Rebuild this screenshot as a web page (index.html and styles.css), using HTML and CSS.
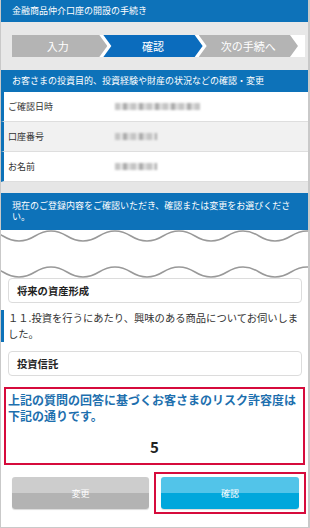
FILE: index.html
```html
<!DOCTYPE html>
<html lang="ja">
<head>
    <meta charset="UTF-8">
    <meta name="viewport" content="width=device-width, initial-scale=1.0">
    <title>金融商品仲介口座の開設の手続き</title>
    <link rel="stylesheet" href="styles.css">
</head>
<body>
    <div class="page">
        <!-- Header -->
        <header class="top-bar">金融商品仲介口座の開設の手続き</header>

        <!-- Steps -->
        <div class="steps-wrap">
            <div class="steps">
                <div class="step">入力</div>
                <div class="step current">確認</div>
                <div class="step">次の手続へ</div>
            </div>
        </div>

        <!-- Customer info -->
        <h2 class="section-title">お客さまの投資目的、投資経験や財産の状況などの確認・変更</h2>
        <div class="info-row">
            <span class="label">ご確認日時</span>
            <span class="blur wide"></span>
        </div>
        <div class="info-row alt">
            <span class="label">口座番号</span>
            <span class="blur"></span>
        </div>
        <div class="info-row">
            <span class="label">お名前</span>
            <span class="blur"></span>
        </div>
        <div class="gap"></div>

        <p class="notice">現在のご登録内容をご確認いただき、確認または変更をお選びください。</p>

        <!-- Omitted part -->
        <svg class="omitted" viewBox="0 0 307 48" width="307" height="48">
            <path d="M -30 6 Q -14 -4 2 6 T 34 6 T 66 6 T 98 6 T 130 6 T 162 6 T 194 6 T 226 6 T 258 6 T 290 6 T 322 6 T 354 6" />
            <path d="M -30 42 Q -14 32 2 42 T 34 42 T 66 42 T 98 42 T 130 42 T 162 42 T 194 42 T 226 42 T 258 42 T 290 42 T 322 42 T 354 42" />
        </svg>

        <section class="answers">
            <div class="answer">将来の資産形成</div>
            <p class="question">１１.投資を行うにあたり、興味のある商品についてお伺いしました。</p>
            <div class="answer">投資信託</div>

            <div class="risk-box">
                <p class="risk-text">上記の質問の回答に基づくお客さまのリスク許容度は下記の通りです。</p>
                <p class="risk-level">5</p>
            </div>

            <div class="actions">
                <button class="btn btn-change">変更</button>
                <div class="btn-frame">
                    <button class="btn btn-confirm">確認</button>
                </div>
            </div>
        </section>
    </div>
</body>
</html>
```

FILE: styles.css
```css
/* General Reset */
* {
    margin: 0;
    padding: 0;
    box-sizing: border-box;
    font-family: "Noto Sans CJK JP", "Noto Sans", sans-serif;
}

body {
    background-color: #fff;
}

.page {
    width: 310px;
    height: 528px;
    border-left: 1px solid #c9c9c9;
    border-right: 2px solid #c9c9c9;
    border-bottom: 1px solid #c9c9c9;
    background-color: #fff;
    overflow: hidden;
}

/* Header */
.top-bar {
    height: 22px;
    line-height: 22px;
    padding-left: 11px;
    background-color: #0d72b9;
    color: #fff;
    font-size: 9px;
}

/* Steps */
.steps-wrap {
    background-color: #e8e8e8;
    padding: 13px 3px 13px 11px;
}

.steps {
    display: flex;
    height: 22px;
    padding-right: 7px;
    background-color: #fff;
}

.step {
    flex: 1;
    height: 22px;
    line-height: 22px;
    padding-right: 4px;
    text-align: center;
    color: #fff;
    font-size: 11px;
    background-color: #b4b4b4;
    clip-path: polygon(0 0, calc(100% - 8px) 0, 100% 50%, calc(100% - 8px) 100%, 0 100%, 8px 50%);
}

.step:first-child {
    clip-path: polygon(0 0, calc(100% - 8px) 0, 100% 50%, calc(100% - 8px) 100%, 0 100%);
}

.step + .step {
    margin-left: -4px;
    padding-left: 4px;
}

.step.current {
    background-color: #0b6cbd;
}

/* Customer info */
.section-title {
    height: 22px;
    line-height: 22px;
    padding-left: 11px;
    background-color: #0d72b9;
    color: #fff;
    font-size: 9px;
    font-weight: normal;
}

.info-row {
    display: flex;
    align-items: center;
    height: 30px;
    border-left: 3px solid #0d72b9;
    border-bottom: 1px solid #dedede;
    padding-left: 4px;
    background-color: #fff;
}

.info-row.alt {
    background-color: #f1f1f1;
}

.label {
    width: 107px;
    font-size: 9px;
    color: #333;
}

.blur {
    display: inline-block;
    width: 42px;
    height: 7px;
    background: repeating-linear-gradient(90deg, #c4c4c4 0 5px, #e6e6e6 5px 8px, #ababab 8px 12px, #dadada 12px 16px);
    filter: blur(0.9px);
}

.blur.wide {
    width: 85px;
}

.gap {
    height: 11px;
    background-color: #e6e6e6;
}

.notice {
    padding: 7px 11px 8px;
    background-color: #0d72b9;
    color: #fff;
    font-size: 9px;
    line-height: 11px;
}

.omitted {
    display: block;
}

.omitted path {
    fill: none;
    stroke: #999;
    stroke-width: 1.5;
}

/* Answers */
.answer {
    margin: 0 6px 0 7px;
    height: 25px;
    line-height: 23px;
    padding-left: 8px;
    border: 1px solid #dcdcdc;
    border-radius: 4px;
    background-color: #fff;
    color: #222;
    font-size: 10.3px;
    font-weight: bold;
}

.question {
    margin: 7px 0 9px;
    border-left: 3px solid #0d72b9;
    padding-left: 4px;
    color: #333;
    font-size: 10.3px;
    line-height: 16px;
}

.risk-box {
    margin: 11px 3px 0;
    padding: 3px 2px 6px;
    border: 2px solid #d60b3c;
}

.risk-text {
    color: #1d6fae;
    font-size: 12px;
    font-weight: bold;
    line-height: 16px;
}

.risk-level {
    margin-top: 13px;
    text-align: center;
    color: #222;
    font-size: 15px;
    font-weight: bold;
    line-height: 20px;
}

.actions {
    display: flex;
    align-items: center;
    margin-top: 7px;
    padding-left: 11px;
}

.btn {
    display: block;
    height: 32px;
    border: none;
    border-radius: 3px;
    color: #fff;
    font-size: 9px;
    cursor: pointer;
    box-shadow: 0 1px 1px rgba(0, 0, 0, 0.15);
}

.btn-change {
    width: 137px;
    background: linear-gradient(#cdcdcd 0 50%, #b3b3b3 50% 100%);
}

.btn-frame {
    margin-left: 5px;
    padding: 3px 5px;
    border: 2px solid #d60b3c;
}

.btn-confirm {
    width: 138px;
    background: linear-gradient(#52c4e9 0 50%, #00a7dc 50% 100%);
}
```
